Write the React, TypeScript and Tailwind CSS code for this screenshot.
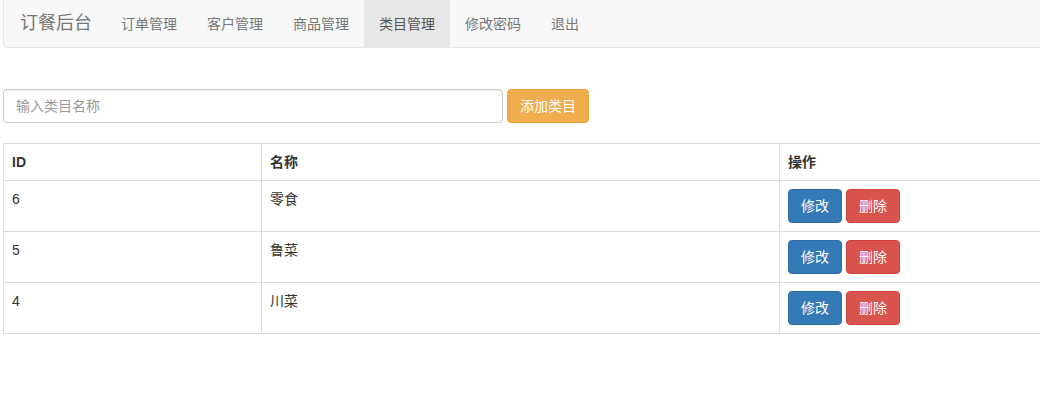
import { useState } from 'react'

type Category = { id: number; name: string }

const navItems = ['订单管理', '客户管理', '商品管理', '类目管理', '修改密码', '退出']

const initial: Category[] = [
  { id: 6, name: '零食' },
  { id: 5, name: '鲁菜' },
  { id: 4, name: '川菜' },
]

export default function App() {
  const [name, setName] = useState('')
  const [rows] = useState<Category[]>(initial)

  return (
    <div
      className="min-h-[415px] w-full overflow-hidden bg-white text-[14px] text-[#333]"
      style={{ fontFamily: '"Liberation Sans", "Noto Sans CJK SC", sans-serif' }}
    >
      <div className="w-[1100px]">
        <nav className="ml-[3px] flex h-[48px] items-stretch rounded-bl-[4px] border-b border-l border-[#e7e7e7] bg-[#f8f8f8]">
          <a className="flex items-center pl-[16px] pr-[14px] text-[18px] text-[#777]">订餐后台</a>
          {navItems.map((item) => (
            <a
              key={item}
              className={
                item === '类目管理'
                  ? 'flex items-center bg-[#e7e7e7] px-[15px] leading-[20px] text-[#555]'
                  : 'flex items-center px-[15px] leading-[20px] text-[#777]'
              }
            >
              {item}
            </a>
          ))}
        </nav>

        <div className="ml-[3px] mt-[41px] flex gap-[4px]">
          <input
            value={name}
            onChange={(e) => setName(e.target.value)}
            placeholder="输入类目名称"
            className="h-[34px] w-[500px] rounded-[4px] border border-[#ccc] px-[12px] text-[14px] text-[#555] shadow-[inset_0_1px_1px_rgba(0,0,0,0.075)] outline-none placeholder:text-[#999]"
          />
          <button className="h-[34px] w-[82px] rounded-[4px] border border-[#eea236] bg-[#f0ad4e] text-[14px] text-white">
            添加类目
          </button>
        </div>

        <table className="ml-[3px] mt-[20px] w-[1097px] table-fixed border-collapse border border-[#ddd]">
          <colgroup>
            <col className="w-[258px]" />
            <col className="w-[518px]" />
            <col />
          </colgroup>
          <thead>
            <tr>
              <th className="border border-[#ddd] p-[8px] text-left font-bold leading-[20px]">ID</th>
              <th className="border border-[#ddd] p-[8px] text-left font-bold leading-[20px]">名称</th>
              <th className="border border-[#ddd] p-[8px] text-left font-bold leading-[20px]">操作</th>
            </tr>
          </thead>
          <tbody>
            {rows.map((r) => (
              <tr key={r.id}>
                <td className="border border-[#ddd] p-[8px] align-top leading-[20px]">{r.id}</td>
                <td className="border border-[#ddd] p-[8px] align-top leading-[20px]">{r.name}</td>
                <td className="border border-[#ddd] p-[8px] align-top leading-[20px]">
                  <div className="flex gap-[4px]">
                    <button className="h-[34px] w-[54px] rounded-[4px] border border-[#2e6da4] bg-[#337ab7] text-[14px] text-white">
                      修改
                    </button>
                    <button className="h-[34px] w-[54px] rounded-[4px] border border-[#d43f3a] bg-[#d9534f] text-[14px] text-white">
                      删除
                    </button>
                  </div>
                </td>
              </tr>
            ))}
          </tbody>
        </table>
      </div>
    </div>
  )
}
